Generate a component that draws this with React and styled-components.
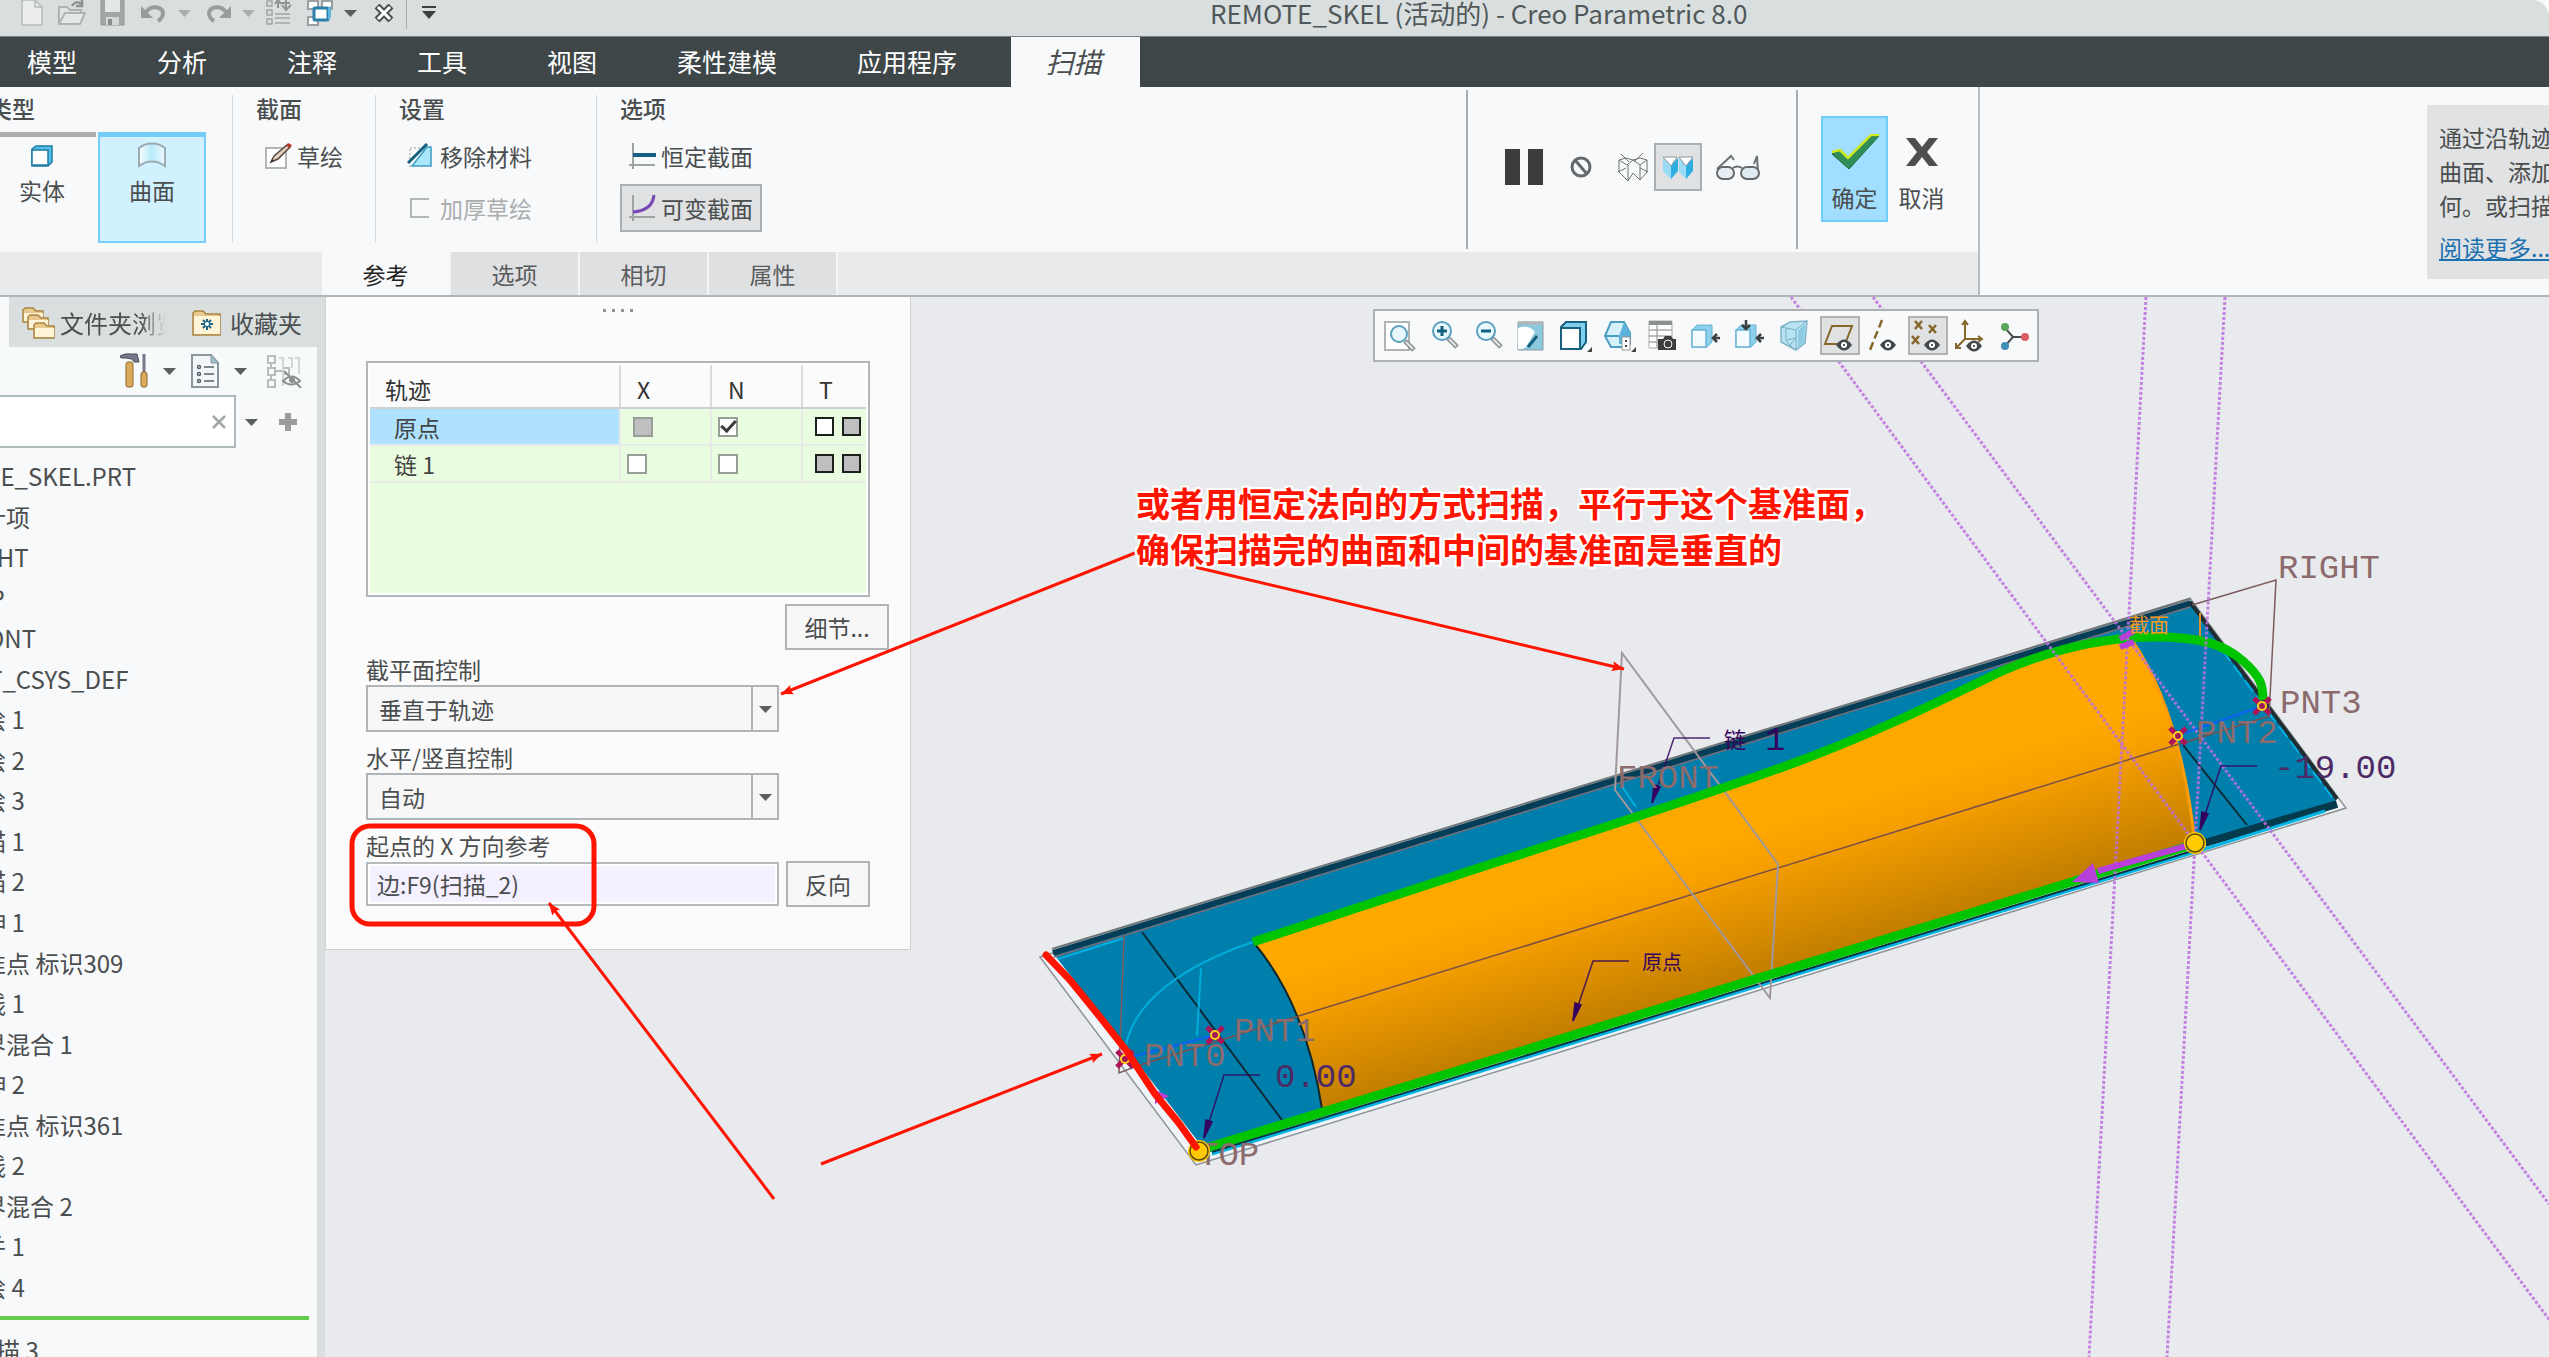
import React from "react";
import styled, { createGlobalStyle, css } from "styled-components";

const Global = createGlobalStyle`
  * { box-sizing: border-box; }
  body {
    margin: 0;
    overflow: hidden;
    background: #f8f9fb;
    color: #4b4e4f;
    font-family: "Noto Sans CJK SC", "Open Sans", sans-serif;
    font-size: 23px;
    line-height: 26px;
  }
  button, input, select { font: inherit; color: inherit; margin: 0; }
  button { padding: 0; background: none; border: 0; }
  svg { display: block; flex: none; }
`;

/* ---------- shell ---------- */
const Shell = styled.div`
  position: relative;
  display: flex;
  flex-direction: column;
  height: 100vh;
  overflow: hidden;
  white-space: nowrap;
`;

const TitleBar = styled.header`
  position: relative;
  display: flex;
  align-items: center;
  height: 36px;
  padding: 0 0 10px 14px;
  background: #d9dfde;
  border-top-right-radius: 17px;
`;

const QuickBar = styled.div`
  display: flex;
  align-items: center;
  gap: 4px;
`;

const QuickButton = styled.button`
  display: flex;
  justify-content: center;
  width: ${(p) => p.$w || 36}px;
`;

const Split = styled.div`
  display: flex;
  align-items: center;
`;

const QuickRule = styled.span`
  width: 1px;
  height: 32px;
  background: #a9afae;
`;

const WindowTitle = styled.h1`
  position: absolute;
  left: 1210px;
  top: 0;
  margin: 0;
  font-size: 26px;
  line-height: 26px;
  font-weight: 400;
  color: #50585a;
`;

const MenuBar = styled.nav`
  display: flex;
  height: 51px;
  background: #3e4648;
  border-top: 1px solid #7c8385;
  overflow: hidden;
`;

const MenuItem = styled.button`
  flex: none;
  padding: 0 40px 2px;
  font-size: 25px;
  color: #fff;
  &:first-child { margin-left: -13px; }
`;

const MenuActive = styled(MenuItem)`
  margin-left: 14px;
  padding: 0 36px 2px 32px;
  width: 129px;
  background: #f8f9fb;
  color: #4b4e4f;
  font-size: 28px;
  font-style: italic;
`;

/* ---------- ribbon ---------- */
const Ribbon = styled.section`
  display: flex;
  height: 210px;
  border-bottom: 2px solid #b0b5b7;
`;

const RibbonMain = styled.div`
  flex: 1;
  min-width: 0;
  display: flex;
  flex-direction: column;
`;

const Groups = styled.div`
  flex: 1;
  display: flex;
`;

const Group = styled.div`
  width: ${(p) => p.$w}px;
  margin: 8px 0 9px;
  padding-left: ${(p) => (p.$first ? 0 : 23)}px;
  border-left: ${(p) => (p.$first ? 0 : 1)}px solid #d6d9db;
  display: flex;
  flex-direction: column;
  align-items: flex-start;
`;

const GroupTitle = styled.h2`
  margin: 0 0 11px;
  font-size: 23px;
  line-height: 26px;
  font-weight: 500;
`;

const TypeGroup = styled(Group)`
  > ${GroupTitle} { margin-left: -11px; }
`;

const TypeRow = styled.div`
  display: flex;
  gap: 2px;
  margin-left: -12px;
`;

const BigButton = styled.button`
  display: flex;
  flex-direction: column;
  align-items: center;
  gap: 9px;
  width: 108px;
  height: 111px;
  padding-top: 5px;
  border-top: 5px solid #acadae;
  ${(p) =>
    p.$on &&
    css`
      border: 2px solid #77cffc;
      border-top: 5px solid #74cdf8;
      background: #d1f1ff;
    `}
`;

const Tool = styled.button`
  display: flex;
  align-items: center;
  gap: 5px;
  height: 48px;
  margin-bottom: 4px;
  padding: 0 7px 0 6px;
  border: 2px solid ${(p) => (p.$on ? "#abafb1" : "transparent")};
  background: ${(p) => (p.$on ? "#dfe1e3" : "none")};
  &:disabled { color: #aaadae; }
`;

const Playback = styled.div`
  width: 330px;
  margin: 3px 0 3px auto;
  padding: 0 0 5px 34px;
  border-left: 2px solid #a9adaf;
  display: flex;
  align-items: center;
  gap: 4px;
`;

const PlayButton = styled.button`
  display: flex;
  align-items: center;
  justify-content: center;
  width: ${(p) => p.$w || 48}px;
  height: 48px;
  border: 2px solid ${(p) => (p.$on ? "#abafb1" : "transparent")};
  background: ${(p) => (p.$on ? "#dfe1e3" : "none")};
`;

const Confirm = styled.div`
  width: 182px;
  margin: 3px 0;
  padding: 0 0 2px 23px;
  border-left: 2px solid #a9adaf;
  display: flex;
  align-items: center;
`;

const ConfirmButton = styled.button`
  display: flex;
  flex-direction: column;
  align-items: center;
  justify-content: flex-end;
  gap: 14px;
  width: 67px;
  height: 106px;
  padding-bottom: 10px;
  border: 2px solid ${(p) => (p.$on ? "#6fcdf9" : "transparent")};
  background: ${(p) => (p.$on ? "#a2deff" : "none")};
`;

const DashTabs = styled.div`
  display: flex;
  height: 45px;
  padding-left: 322px;
  background: #e9eaec;
`;

const DashTab = styled.button`
  width: 129px;
  border-right: 2px solid #f3f4f5;
  background: ${(p) => (p.$on ? "#f8f9fb" : "#dfe0e2")};
  color: ${(p) => (p.$on ? "#222" : "#5a5c5d")};
`;

const Help = styled.aside`
  flex: 0 0 571px;
  padding: 18px 0 15px 447px;
  border-left: 2px solid #b9bdbf;
  overflow: hidden;
`;

const HelpCard = styled.div`
  width: 320px;
  height: 174px;
  padding: 15px 12px;
  background: #e0e2e4;
  line-height: 34px;
  > p { margin: 0 0 8px; white-space: pre; }
  > a { color: #1c71b0; text-decoration: underline; }
`;

/* ---------- body ---------- */
const Body = styled.div`
  flex: 1;
  min-height: 0;
  display: flex;
`;

const Sidebar = styled.aside`
  flex: 0 0 325px;
  display: flex;
  flex-direction: column;
  border-right: 8px solid #d9dfdf;
  font-size: 24px;
  overflow: hidden;
`;

const SideTabs = styled.div`
  display: flex;
  align-items: center;
  height: 50px;
  margin-left: 9px;
  padding: 2px 0 0 13px;
  background: #d9dfdf;
`;

const SideTab = styled.button`
  display: flex;
  align-items: center;
  gap: ${(p) => p.$gap}px;
  margin-right: 26px;
`;

const Fade = styled.span`
  width: 106px;
  overflow: hidden;
  text-align: left;
  mask-image: linear-gradient(90deg, #000 76%, transparent);
`;

const SideTools = styled.div`
  display: flex;
  align-items: center;
  justify-content: flex-end;
  gap: 15px;
  height: 48px;
  padding: 0 15px 0 0;
  background: #f6fafa;
`;

const PlainButton = styled.button`
  display: flex;
`;

const SearchRow = styled.div`
  display: flex;
  align-items: center;
  gap: 9px;
  height: 53px;
`;

const SearchBox = styled.div`
  display: flex;
  align-items: center;
  width: 236px;
  height: 53px;
  padding-right: 8px;
  border: 2px solid #aeb9bb;
  border-left: 0;
  background: #fff;
  > input { flex: 1; min-width: 0; border: 0; outline: 0; background: none; }
`;

const Tree = styled.ul`
  flex: 1;
  min-height: 0;
  margin: 0;
  padding: 8px 0 9px;
  list-style: none;
  display: grid;
  grid-auto-rows: 1fr;
`;

const TreeItem = styled.li`
  display: flex;
  align-items: center;
  min-height: 0;
  margin-left: ${(p) => p.$indent}px;
`;

const InsertMark = styled.div`
  height: 4px;
  margin-right: 8px;
  background: #64cc48;
`;

const Pending = styled.div`
  height: 37px;
  padding-top: 17px;
  margin-left: -28px;
  overflow: hidden;
`;

const Viewport = styled.main`
  position: relative;
  flex: 1;
  min-width: 0;
  background: #e8eaee;
`;

const Scene = styled.svg`
  position: absolute;
  inset: 0;
  width: 100%;
  height: 100%;
`;

const ViewTools = styled.div`
  position: absolute;
  left: 1048px;
  top: 12px;
  display: flex;
  align-items: center;
  gap: 4px;
  height: 53px;
  padding: 0 1px 0 5px;
  border: 2px solid #adb1b3;
  background: #f8f9fb;
`;

const ViewButton = styled.button`
  display: flex;
  align-items: center;
  justify-content: center;
  width: 40px;
  height: 39px;
  border: 2px solid ${(p) => (p.$on ? "#b0b2b4" : "transparent")};
  background: ${(p) => (p.$on ? "#dfe1e3" : "none")};
`;

/* ---------- dashboard panel ---------- */
const Panel = styled.section`
  position: relative;
  width: 586px;
  padding: 12px 20px 42px 40px;
  border: 1px solid #cdd2d4;
  border-top: 0;
  background: #fbfbfc;
`;

const Grip = styled.div`
  display: flex;
  justify-content: center;
  gap: 6px;
  height: 52px;
  margin-right: 20px;
  > i { width: 3px; height: 3px; background: #8f9294; }
`;

const TableFrame = styled.div`
  width: 504px;
  height: 236px;
  padding: 2px;
  border: 2px solid #b1b6b8;
  background: #fff;
`;

const TableFill = styled.div`
  height: 100%;
  background: #eafcdf;
`;

const Tracks = styled.table`
  width: 100%;
  table-layout: fixed;
  border-collapse: collapse;
  th {
    height: 43px;
    padding: 5px 0 0 15px;
    background: #fbfbfc;
    border-bottom: 2px solid #cdd1d2;
    font-weight: 400;
    text-align: left;
    color: #333;
  }
  td {
    height: 37px;
    padding: 0 0 0 6px;
    border-bottom: 2px solid #e6ebe8;
    color: #444;
  }
  th + th { padding-left: 16px; border-left: 2px solid #d8dcdd; }
  td + td { border-left: 2px solid #e6ebe8; }
`;

const NameCell = styled.td`
  && {
    padding-left: 24px;
    background: ${(p) => (p.$on ? "#aee2ff" : "none")};
  }
`;

const Cell = styled.div`
  display: flex;
  align-items: center;
  gap: 8px;
  padding-left: ${(p) => p.$pad || 0}px;
`;

const Tick = styled.input`
  appearance: none;
  display: grid;
  place-content: center;
  width: ${(p) => (p.$dark ? 19 : 20)}px;
  height: ${(p) => (p.$dark ? 19 : 20)}px;
  margin: 0;
  border: 2px solid ${(p) => (p.$dark ? "#1d1f1d" : "#9a9e9b")};
  background: ${(p) => (p.$grey ? "#bfbfbf" : "#fff")};
  &:checked::before {
    content: "";
    width: 12px;
    height: 6px;
    margin-bottom: 4px;
    border: solid #3a3c3a;
    border-width: 0 0 3px 3px;
    rotate: -48deg;
  }
`;

const boxed = css`
  border: 2px solid #b1b4b6;
  background: #f7f7f8;
`;

const PushButton = styled.button`
  ${boxed}
  width: ${(p) => p.$w}px;
  height: 46px;
`;

const DetailRow = styled.div`
  display: flex;
  justify-content: flex-end;
  margin: 7px 1px 6px 0;
`;

const Field = styled.div`
  display: flex;
  flex-direction: column;
  margin-bottom: ${(p) => p.$gap || 0}px;
  > label { line-height: 26px; margin-bottom: 3px; }
`;

const SelectWrap = styled.div`
  ${boxed}
  position: relative;
  width: 413px;
  height: 47px;
`;

const Select = styled.select`
  appearance: none;
  width: 100%;
  height: 100%;
  padding: 0 30px 0 11px;
  border: 0;
  outline: 0;
  background: none;
`;

const SelectArrow = styled.span`
  position: absolute;
  inset: 0 0 0 auto;
  width: 26px;
  display: grid;
  place-content: center;
  border-left: 2px solid #b1b4b6;
  pointer-events: none;
`;

const RefRow = styled.div`
  display: flex;
  align-items: center;
  gap: 7px;
`;

const RefInput = styled.input`
  width: 413px;
  height: 44px;
  padding: 0 9px;
  border: 2px solid #b5babc;
  outline: 0;
  background: #f5f0ff;
  box-shadow: inset 0 0 0 2px #fff;
`;

/* ---------- annotations ---------- */
const Notes = styled.svg`
  position: absolute;
  inset: 0;
  width: 100%;
  height: 100%;
  pointer-events: none;
`;

const Callout = styled.p`
  position: absolute;
  left: 811px;
  top: 183px;
  margin: 0;
  font-size: 34px;
  line-height: 46px;
  font-weight: 700;
  color: #ff1400;
  text-shadow: 2px 0 #fff, -2px 0 #fff, 0 2px #fff, 0 -2px #fff, 2px 2px #fff,
    -2px -2px #fff, 2px -2px #fff, -2px 2px #fff, 0 0 4px #fff;
`;

/* ---------- icons ---------- */
const Caret = ({ w = 13, c = "#5b5e5f" }) => (
  <svg width={w} height="8" viewBox="0 0 13 8"><path d="M0 1h13L6.500 8z" fill={c} /></svg>
);
const Svg = ({ w, h, children }) => (
  <svg width={w} height={h} viewBox={`0 0 ${w} ${h}`} fill="none">{children}</svg>
);

const NewIcon = () => (
  <Svg w={22} h={26}><path d="M1 0h13l7 7v18H1z" fill="#eceeee" stroke="#b5baba" strokeWidth="1.500" /><path d="M14 0v7h7" stroke="#b5baba" strokeWidth="1.500" /></Svg>
);
const OpenIcon = () => (
  <Svg w={28} h={26}><path d="M1 23V7h8l3 3h11v4" stroke="#b0b4b4" strokeWidth="2" fill="#e3e5e5" /><path d="M1 24l6-11h20l-5 11z" fill="#e6e8e8" stroke="#b0b4b4" strokeWidth="2" /><path d="M14 6c2-4 6-5 9-2M24 0v6h-6" stroke="#8e9292" strokeWidth="2.500" /></Svg>
);
const SaveIcon = () => (
  <Svg w={25} h={26}><path d="M1 0h23v25H1z" fill="#a2a6a6" stroke="#929696" /><path d="M5 0h15v12H5z" fill="#e3e6e6" /><path d="M6 17h13v8H6z" fill="#d4d7d7" /><path d="M8 19h4v6H8z" fill="#888c8c" /></Svg>
);
const UndoIcon = ({ flip }) => (
  <svg width="26" height="20" viewBox="0 0 26 20" fill="none" transform={flip ? "scale(-1 1)" : undefined}>
    <path d="M5 9c5-7 16-6 17 1 0 4-2 6-5 8" stroke="#989c9c" strokeWidth="4" /><path d="M0 3v12h12z" fill="#989c9c" />
  </svg>
);
const RegenIcon = () => (
  <Svg w={28} h={26}>
    <g stroke="#a3a7a7" strokeWidth="1.500"><path d="M1 1h5v5H1zM1 10h5v5H1zM1 19h5v5H1z" /><path d="M9 14h15M9 18h15M9 23h15" /></g>
    <path d="M12 8V1M9 4l3-4 3 4M20 0v9M16 5l4 5 5-5M14 3h10" stroke="#8f9393" strokeWidth="2" />
  </Svg>
);
const WindowsIcon = () => (
  <Svg w={28} h={26}>
    <path d="M2 1h10v8H2zM16 1h10v8H16zM2 17h10v8H2z" fill="#fff" stroke="#9aa0a2" strokeWidth="2" />
    <rect x="8" y="8" width="14" height="12" rx="1" fill="#fff" stroke="#2b7fa8" strokeWidth="3" /><path d="M22 8l3-2v11l-3 3z" fill="#5bb5dc" />
  </Svg>
);
const CloseWinIcon = () => (
  <Svg w={20} h={18}>
    <path d="M3 2l14 14M17 2L3 16" stroke="#4b4f50" strokeWidth="7" /><path d="M4 3l12 12M16 3L4 15" stroke="#fff" strokeWidth="3" />
  </Svg>
);
const MoreIcon = () => (
  <Svg w={14} h={14}><path d="M0 1h14" stroke="#3c4041" strokeWidth="2" /><path d="M0 5h14l-7 8z" fill="#3c4041" /></Svg>
);

const SolidIcon = () => (
  <Svg w={24} h={26}><path d="M2 7l4-3h16v16l-4 4H2z" fill="#55bfe8" stroke="#1d7ba3" strokeWidth="1.500" /><path d="M2 8h16v15H2z" fill="#fff" stroke="#1d7ba3" strokeWidth="1.500" /></Svg>
);
const SurfaceIcon = () => (
  <Svg w={28} h={26}>
    <defs><linearGradient id="surf"><stop stopColor="#f7fdff" /><stop offset=".5" stopColor="#b9ebfb" /><stop offset="1" stopColor="#eefaff" /></linearGradient></defs>
    <path d="M1 24V6c7-6 19-6 26 0v18c-8-6-18-6-26 0z" fill="url(#surf)" stroke="#9aabb2" strokeWidth="2" />
  </Svg>
);
const SketchIcon = () => (
  <Svg w={28} h={28}>
    <path d="M2 6h20v20H2z" fill="#fff" stroke="#b2b5b6" strokeWidth="2" /><path d="M7 20l3-6L23 3l3 2-12 12z" fill="#e3cfc0" stroke="#5b4a40" strokeWidth="1.500" /><path d="M22 4l2-3 4 2-2 3z" fill="#b93b2c" /><path d="M6 21l2-4 2 2z" fill="#333" />
  </Svg>
);
const RemoveIcon = () => (
  <Svg w={28} h={26}><path d="M3 6v18M3 5h10" stroke="#999" strokeDasharray="2 2" /><path d="M20 4h4v19H5z" fill="#abe7fb" stroke="#3b9cc4" strokeWidth="1.500" /><path d="M1 20L20 1" stroke="#155f80" strokeWidth="3" /></Svg>
);
const ThickenIcon = () => (
  <Svg w={28} h={22}><path d="M22 2H4v18h18" stroke="#b4b7b8" strokeWidth="2" /></Svg>
);
const ConstIcon = () => (
  <Svg w={28} h={28}><path d="M5 1v26M1 23h26" stroke="#9fa3a4" strokeWidth="2" /><path d="M5 13h23" stroke="#175f82" strokeWidth="4" /></Svg>
);
const VarIcon = () => (
  <Svg w={28} h={28}><path d="M5 1v26M1 23h26" stroke="#9fa3a4" strokeWidth="2" /><path d="M5 18c13-1 20-7 21-17" stroke="#7a49b5" strokeWidth="3" /></Svg>
);

const PauseIcon = () => (
  <Svg w={38} h={36}><path d="M0 0h15v36H0zM23 0h15v36H23z" fill="#3b3c3d" /></Svg>
);
const BanIcon = () => (
  <Svg w={22} h={22}><circle cx="11" cy="11" r="9" stroke="#66696b" strokeWidth="3" /><path d="M5 4l12 14" stroke="#66696b" strokeWidth="3" /></Svg>
);
const MeshIcon = () => (
  <Svg w={34} h={30}><path d="M3 8l7-2 7 2 7-2 7 2v12l-7 8-7-7-5 8-9-9zM3 8l8 5 6-5 7 5 7-5M12 13v15M24 13v15M2 20l8-4M32 20l-8-4M5 2l8 8M27 1l-9 9" stroke="#6f7273" strokeWidth="1" /></Svg>
);
const AttachIcon = () => (
  <Svg w={32} h={24}>
    <path d="M1 3l8 7v14l-8-8zM17 3l7 7v14l-7-7z" fill="#9adcf5" /><path d="M9 10l7-7v13l-7 8zM24 10l7-7v13l-7 8z" fill="#2eaee0" /><path d="M1 2h14l-6 9zM17 2h14l-7 9z" fill="#fff" stroke="#8b979c" />
  </Svg>
);
const GlassesIcon = () => (
  <Svg w={46} h={26}>
    <path d="M2 15L16 2l3 4M39 10L42 2l1 16" stroke="#6c6f70" strokeWidth="2" /><rect x="2" y="13" width="17" height="12" rx="6" fill="#e6eef3" stroke="#65696b" strokeWidth="2" /><rect x="26" y="13" width="18" height="12" rx="6" fill="#dfeaf1" stroke="#65696b" strokeWidth="2" /><path d="M18 14q4-3 9 0" stroke="#65696b" strokeWidth="2" />
  </Svg>
);
const OkIcon = () => (
  <Svg w={50} h={36}><path d="M2 20l8-3 8 8L42 2h7L19 35z" fill="#2f8d58" stroke="#1c6b3c" /><path d="M2 18l8-2 8 8L41 1h8" stroke="#cdea20" strokeWidth="2.500" /></Svg>
);
const CancelIcon = () => (
  <Svg w={34} h={32}><path d="M1 0h9l7 9 7-9h9L22 14l11 14h-9l-7-9-7 9H1l11-14z" fill="#4c4e4f" /></Svg>
);

const folder = (x, y, w, h) => (
  <g key={`${x}-${y}`}><path d={`M${x} ${y + h}V${y + 2}l2-2h8l3 3h${w - 14}v${h - 3}z`} fill="#e9c88d" stroke="#a98444" strokeWidth="1.500" /><path d={`M${x + 1} ${y + 5}h${w - 2}v${h - 6}h-${w - 2}z`} fill="#fff3d8" /></g>
);
const FoldersIcon = () => <Svg w={34} h={34}>{folder(1, 2, 21, 14)}{folder(6, 9, 21, 14)}{folder(12, 17, 21, 15)}</Svg>;
const FavIcon = () => (
  <Svg w={30} h={28}>{folder(1, 2, 28, 24)}<path d="M15 10v11M9 15h12M11 11l8 8M19 11l-8 8" stroke="#1b6283" strokeWidth="2" /><circle cx="15" cy="15" r="2" fill="#fff" /></Svg>
);
const HammerIcon = () => (
  <Svg w={28} h={36}>
    <path d="M0 3q5-3 11-2h6l2 8h-5l-2-3-6-1H1z" fill="#77798a" stroke="#4d4f5c" /><rect x="6" y="9" width="7" height="25" rx="2" fill="#dbab5d" stroke="#8d652a" /><path d="M24 1v18" stroke="#77798a" strokeWidth="3" /><rect x="21" y="19" width="6" height="15" rx="2" fill="#dbab5d" stroke="#8d652a" />
  </Svg>
);
const ListIcon = () => (
  <Svg w={28} h={34}>
    <path d="M1 1h19l7 8v24H1z" fill="#f3f7fa" stroke="#8a979e" strokeWidth="2" /><path d="M20 1v8h7" fill="#9fc0c9" stroke="#8a979e" /><g stroke="#55626a" strokeWidth="1.500"><path d="M13 13h10M13 20h10M13 27h10" /><circle cx="8" cy="13" r="1.500" /><circle cx="8" cy="20" r="1.500" /><circle cx="8" cy="27" r="1.500" /></g>
  </Svg>
);
const TreeIcon = () => (
  <Svg w={36} h={34}>
    <g stroke="#b8bcbd" strokeWidth="2"><path d="M2 2h7v7H2zM2 14h7v7H2zM2 26h7v7H2zM5 9v5M5 21v5M9 17h9M17 14h6v6h-6z" /><path d="M13 4h4v28M22 4h4v10M29 4h4v16" stroke="#d3d6d7" /></g>
    <path d="M17 27q9-9 17 0q-9 7-17 0zM18 17l17 17" stroke="#8b8f90" strokeWidth="2" /><circle cx="26" cy="26" r="3" fill="#8b8f90" />
  </Svg>
);
const XIcon = () => <Svg w={14} h={14}><path d="M1 1l12 12M13 1L1 13" stroke="#a3a7a8" strokeWidth="2.500" /></Svg>;
const PlusIcon = () => <Svg w={20} h={20}><path d="M10 1v18M1 10h18" stroke="#9a9c9d" strokeWidth="6" /></Svg>;

const Lens = ({ x = 16, y = 12, r = 9, children }) => (
  <g><path d={`M${x + 6} ${y + 7}l9 9`} stroke="#8e9293" strokeWidth="5" /><path d={`M${x + 7} ${y + 8}l7 7`} stroke="#e2e4e5" strokeWidth="2" /><circle cx={x} cy={y} r={r} fill="#e9f8fd" stroke="#5a9fbe" strokeWidth="2" />{children}</g>
);
const Eye = ({ x, y }) => (
  <g><path d={`M${x - 8} ${y}q8-11 16 0q-8 11-16 0z`} fill="#45484a" /><circle cx={x} cy={y} r="3" fill="#fff" /><circle cx={x} cy={y} r="1" fill="#222" /></g>
);
const cubeLite = (
  <><path d="M2 11l5-5h15v17l-5 5H2z" fill="#8dd0ec" stroke="#69b3d4" /><path d="M2 11h14v17H2z" fill="#f4fbfe" stroke="#69b3d4" strokeWidth="1.500" /></>
);
const VIEW_ICONS = [
  ["重新调整", <><path d="M3 3h24v28H3z" fill="#fff" stroke="#b0b3b4" strokeWidth="2" /><Lens x={17} y={15} r={8} /></>],
  ["放大", <Lens><path d="M16 7v10M11 12h10" stroke="#11607f" strokeWidth="3" /></Lens>],
  ["缩小", <Lens><path d="M11 12h10" stroke="#11607f" strokeWidth="3" /></Lens>],
  ["重画", <><path d="M4 3h25v28H4z" fill="#8cc8de" stroke="#8a999f" /><path d="M4 9q11-4 17 4L12 28q-4 3-8 2z" fill="#fff" /><path d="M4 4h25" stroke="#b2b5b6" strokeWidth="3" /><path d="M14 28l9-11" stroke="#17607f" strokeWidth="3" /></>],
  ["显示样式", <><path d="M3 8l5-5h20v20l-5 7H3z" fill="#7fd0ee" stroke="#1a6180" strokeWidth="2" /><path d="M3 9h19v21H3z" fill="#fff" stroke="#1a6180" strokeWidth="2" /><path d="M34 28v5h-5z" fill="#444" /></>],
  ["已保存方向", <><path d="M3 17L9 3h13l6 11v11l-5 3H9z" fill="#d6f1fa" stroke="#4a9dc1" strokeWidth="2" /><path d="M17 17L22 3l6 11v11H17z" fill="#5cb4dc" /><path d="M3 17h14" stroke="#4a9dc1" strokeWidth="2" /><path d="M20 18h8v13h-8z" fill="#fff" stroke="#999" /><path d="M24 21v2M24 26v2" stroke="#444" strokeWidth="2" /><path d="M34 28v5h-5z" fill="#444" /></>],
  ["视图管理器", <><path d="M3 2h23v27H3z" fill="#fff" stroke="#a8abac" /><path d="M3 4h23" stroke="#8e9192" strokeWidth="4" /><path d="M3 11h23M3 17h23M3 23h23M11 5v24" stroke="#a8abac" strokeWidth="1.500" /><path d="M12 20h5l2-3h6l2 3h3v11H12z" fill="#3b3d3e" /><circle cx="22" cy="25" r="4" stroke="#fff" strokeWidth="1" /></>],
  ["外观", <>{cubeLite}<path d="M30 19h-7M27 15l-4 4 4 4" stroke="#3c4042" strokeWidth="2.500" /></>],
  ["场景", <>{cubeLite}<path d="M12 1v8M8 6l4 4 4-4M30 19h-7M27 15l-4 4 4 4" stroke="#3c4042" strokeWidth="2.500" /></>],
  ["透视图", <><path d="M3 8L12 3l17-1-2 22-9 7L3 23z" fill="#b9e3f3" stroke="#82b4c7" strokeWidth="1.500" /><path d="M3 8l15 3 11-9M18 11v20M8 10v12l6 6M9 21l9-2M12 26l5-6" stroke="#74aec5" strokeWidth="1" /><path d="M20 12l7-7-1 18-6 6z" fill="#8dcbe3" /></>],
  ["平面显示", <><path d="M10 7h20l-7 18H3z" stroke="#86672a" strokeWidth="2" /><Eye x={22} y={26} /></>, true],
  ["轴显示", <><path d="M16 1L4 31" stroke="#86672a" strokeWidth="2.500" strokeDasharray="8 4" /><Eye x={22} y={26} /></>],
  ["点显示", <><path d="M5 2l7 8M12 2l-7 8M19 6l7 8M26 6l-7 8M2 17l7 8M9 17l-7 8" stroke="#86672a" strokeWidth="2.500" /><Eye x={22} y={26} /></>, true],
  ["坐标系显示", <><path d="M11 20V3M11 20h15M11 20l-8 8M8 6l3-4 3 4M24 17l4 3-4 3M2 24v5h5" stroke="#86672a" strokeWidth="2" /><Eye x={20} y={27} /></>],
  ["旋转中心", <><path d="M7 9l8 9h12M15 18L7 27" stroke="#4b4e50" strokeWidth="2" /><circle cx="7" cy="8" r="4" fill="#5ba55a" /><circle cx="27" cy="18" r="4" fill="#df5f63" /><circle cx="7" cy="27" r="4" fill="#3f8fb5" /></>],
];

/* ---------- model drawing ---------- */
const Leader = ({ x, y, dx, dy }) => (
  <g>
    <path d={`M${x + 36} ${y}h-36l${dx} ${dy}`} fill="none" stroke="#35045f" strokeWidth="1.500" opacity=".85" />
    <path d={`M${x + dx} ${y + dy}l2-18 6 2z`} fill="#35005f" stroke="#35005f" strokeWidth="1.500" />
  </g>
);
const Point = ({ x, y }) => (
  <g>
    <path d={`M${x - 8} ${y - 8}l16 16m0-16l-16 16`} stroke="#ae1257" strokeWidth="5" />
    <circle cx={x} cy={y} r="4" fill="#a01657" stroke="#ffd21c" strokeWidth="2" />
  </g>
);
const Handle = ({ x, y }) => (
  <g><circle cx={x} cy={y} r="11" fill="#ffc800" /><circle cx={x} cy={y} r="9" fill="#ffcb00" stroke="#5a4a10" strokeWidth="1.500" /></g>
);
const CadText = styled.text`
  font-family: "Liberation Mono", "Noto Sans CJK SC", monospace;
  font-size: ${(p) => p.$size || 34}px;
  fill: ${(p) => p.$fill || "#8d6b6d"};
`;

const UPPER = "C1600 829 1700 797 1783 767S1930 706 2000 672";

const Model = () => (
  <Scene viewBox="325 297 2224 1060" preserveAspectRatio="xMinYMin slice" fill="none" aria-label="REMOTE_SKEL">
    <defs>
      <linearGradient id="skin" gradientUnits="userSpaceOnUse" x1="386" y1="1250" x2="430" y2="1392">
        <stop stopColor="#ffa800" /><stop offset=".25" stopColor="#f7a000" /><stop offset="1" stopColor="#bf7c00" />
      </linearGradient>
    </defs>
    <path d="M1040 957L1196 1165 2346 808 2190 598z" fill="#f0f3f7" stroke="#8f9294" strokeWidth="1.500" />
    <path d="M1053 953L2190 603 2337 800 1207 1153z" fill="#007fac" />
    <path d="M1052 949L2190 599" stroke="#6f7578" strokeWidth="2" />
    <path d="M1053 953L2191 603" stroke="#033d57" strokeWidth="6" />
    <path d="M1054 957L2190 607" stroke="#7d6a72" strokeWidth="1.500" />
    <path d="M1058 959L1124 938M1621 785L1636 807" stroke="#00aee0" strokeWidth="2" />
    <path d="M2190 602L2337 799" stroke="#1f2d33" strokeWidth="4" />
    <path d="M2222 650L2332 797" stroke="#00aee0" strokeWidth="2" strokeDasharray="14 5" />
    <path d="M2205 843L2337 804" stroke="#033a4c" strokeWidth="8" />
    <path d="M1212 1154L2205 849 2325 811" stroke="#00b4e6" strokeWidth="3" />
    <path d="M1212 1152L2205 847" stroke="#06333f" strokeWidth="2" />
    <path d="M1142 932L1282 1120M2183 745L2247 825" stroke="#0d2b36" strokeWidth="2" />
    <path d="M1126 1045C1135 1000 1185 965 1253 942M1201 968L1197 1036" stroke="#00aedb" strokeWidth="2" />

    <path d={`M1254 943L1500 861${UPPER}C2050 650 2090 641 2132 640Q2180 710 2195 843L1322 1109Q1306 1005 1254 943z`} fill="url(#skin)" />
    <path d="M1254 943Q1306 1005 1322 1109" stroke="#10262b" strokeWidth="2" />
    <path d="M2132 640Q2180 710 2195 843" stroke="#ff9c0a" strokeWidth="3" />
    <path d="M2200 613v24" stroke="#e0922a" strokeWidth="2" />
    <path d="M1140 1065L2270 716" stroke="#7b4f45" strokeWidth="1.500" />
    <path d="M1124 936L1119 1073 1140 1065M2192 605L2276 580 2269 717" stroke="#7d5a5c" strokeWidth="1.500" />
    <path d="M1131 1057L1215 1035M2185 733L2262 706" stroke="#0a63f0" strokeWidth="2" />

    <path d="M1622 653L1778 864 1770 998 1615 790z" stroke="#a0989c" strokeWidth="2" />
    <path d={`M1253 942L1500 861${UPPER}C2050 650 2100 638 2150 637S2225 645 2243 661 2263 685 2263 700M1206 1148L2195 844`} stroke="#00c400" strokeWidth="9" />

    <g stroke="#bd6fe0" strokeWidth="3" strokeDasharray="3 2" opacity=".85">
      <path d="M1791 297L2195 843 2577 1357M1873 297L2121 630 2549 1204" />
      <path d="M2146 297L2089 1357M2225 297L2195 843 2167 1357" />
    </g>
    <path d="M2190 845L2098 871M2120 639l14-8M2120 647l14-5" stroke="#b83fd9" strokeWidth="6" />
    <path d="M2072 882L2093 863 2099 883zM1155 1090l14 6-14 8z" fill="#b83fd9" />

    <Leader x={1224} y={1075} dx={-20} dy={63} />
    <Leader x={2221} y={766} dx={-21} dy={64} />
    <Leader x={1674} y={738} dx={-22} dy={65} />
    <Leader x={1593} y={961} dx={-20} dy={60} />

    <CadText x="1144" y="1066">PNT0</CadText>
    <CadText x="1234" y="1041">PNT1</CadText>
    <CadText x="1198" y="1165">TOP</CadText>
    <CadText x="2278" y="578">RIGHT</CadText>
    <CadText x="2280" y="713">PNT3</CadText>
    <CadText x="2196" y="743">PNT2</CadText>
    <CadText x="1617" y="788">FRONT</CadText>
    <CadText x="1275" y="1087" $fill="#4b2a66">0.00</CadText>
    <CadText x="2274" y="778" $fill="#4b2a66">-19.00</CadText>
    <CadText x="1724" y="748" $size={22} $fill="#35045f">链</CadText>
    <CadText x="1765" y="750" $fill="#35045f">1</CadText>
    <CadText x="1642" y="970" $size={20} $fill="#35045f">原点</CadText>
    <CadText x="2129" y="633" $size={20} $fill="#f59a1c">截面</CadText>

    <Point x={1125} y={1059} />
    <Point x={1215} y={1035} />
    <Point x={2178} y={736} />
    <Point x={2262} y={706} />
    <Handle x={1199} y={1151} />
    <Handle x={2195} y={843} />
    <path d="M1046 955L1070 980 1100 1017 1126 1050 1155 1094 1178 1122 1196 1147" stroke="#ff1400" strokeWidth="7" strokeLinecap="round" strokeLinejoin="round" />
  </Scene>
);

const ARROWS = [
  [1135, 553, 781, 694],
  [1195, 567, 1624, 669],
  [774, 1199, 549, 903],
  [821, 1164, 1102, 1054],
];

const Annotations = () => (
  <Notes viewBox="325 297 2224 1060" preserveAspectRatio="xMinYMin slice" fill="none" overflow="visible">
    <defs>
      <marker id="head" viewBox="0 0 12 10" refX="12" refY="5" markerWidth="12" markerHeight="10" markerUnits="userSpaceOnUse" orient="auto">
        <path d="M0 0l12 5-12 5 2-5z" fill="#ff1400" />
      </marker>
    </defs>
    {ARROWS.map(([x1, y1, x2, y2]) => (
      <line key={x1} x1={x1} y1={y1} x2={x2} y2={y2} stroke="#ff1400" strokeWidth="3" markerEnd="url(#head)" />
    ))}
    <rect x="352" y="826" width="242" height="98" rx="18" stroke="#ff1400" strokeWidth="5" />
  </Notes>
);

const MENUS = ["模型", "分析", "注释", "工具", "视图", "柔性建模", "应用程序"];
const TREE = [
  "设计项", "RIGHT", "TOP", "FRONT", "PRT_CSYS_DEF", "草绘 1", "草绘 2", "草绘 3", "扫描 1", "扫描 2",
  "拉伸 1", "基准点 标识309", "曲线 1", "边界混合 1", "拉伸 2", "基准点 标识361", "曲线 2", "边界混合 2", "合并 1", "草绘 4",
];

export default function App() {
  return (
    <Shell>
      <Global />
      <TitleBar>
        <QuickBar>
          <QuickButton aria-label="新建"><NewIcon /></QuickButton>
          <QuickButton aria-label="打开"><OpenIcon /></QuickButton>
          <QuickButton aria-label="保存"><SaveIcon /></QuickButton>
          <Split>
            <QuickButton $w={40} aria-label="撤消"><UndoIcon /></QuickButton>
            <QuickButton $w={20} aria-label="撤消列表"><Caret c="#a9adad" /></QuickButton>
          </Split>
          <Split>
            <QuickButton $w={40} aria-label="重做"><UndoIcon flip /></QuickButton>
            <QuickButton $w={20} aria-label="重做列表"><Caret c="#a9adad" /></QuickButton>
          </Split>
          <QuickButton aria-label="重新生成"><RegenIcon /></QuickButton>
          <Split>
            <QuickButton $w={36} aria-label="窗口"><WindowsIcon /></QuickButton>
            <QuickButton $w={24} aria-label="窗口列表"><Caret /></QuickButton>
          </Split>
          <QuickButton aria-label="关闭"><CloseWinIcon /></QuickButton>
          <QuickRule />
          <QuickButton aria-label="自定义"><MoreIcon /></QuickButton>
        </QuickBar>
        <WindowTitle>REMOTE_SKEL (活动的) - Creo Parametric 8.0</WindowTitle>
      </TitleBar>

      <MenuBar>
        {MENUS.map((m) => <MenuItem key={m}>{m}</MenuItem>)}
        <MenuActive>扫描</MenuActive>
      </MenuBar>

      <Ribbon>
        <RibbonMain>
          <Groups>
            <TypeGroup $first $w={232}>
              <GroupTitle>类型</GroupTitle>
              <TypeRow>
                <BigButton aria-pressed="false"><SolidIcon />实体</BigButton>
                <BigButton $on aria-pressed="true"><SurfaceIcon />曲面</BigButton>
              </TypeRow>
            </TypeGroup>
            <Group $w={143}>
              <GroupTitle>截面</GroupTitle>
              <Tool><SketchIcon />草绘</Tool>
            </Group>
            <Group $w={221}>
              <GroupTitle>设置</GroupTitle>
              <Tool><RemoveIcon />移除材料</Tool>
              <Tool disabled><ThickenIcon />加厚草绘</Tool>
            </Group>
            <Group $w={220}>
              <GroupTitle>选项</GroupTitle>
              <Tool><ConstIcon />恒定截面</Tool>
              <Tool $on aria-pressed="true"><VarIcon />可变截面</Tool>
            </Group>
            <Playback>
              <PlayButton aria-label="暂停" $w={44}><PauseIcon /></PlayButton>
              <PlayButton aria-label="无预览" $w={62}><BanIcon /></PlayButton>
              <PlayButton aria-label="分离" $w={34}><MeshIcon /></PlayButton>
              <PlayButton aria-label="连接" $on><AttachIcon /></PlayButton>
              <PlayButton aria-label="校验" $w={64}><GlassesIcon /></PlayButton>
            </Playback>
            <Confirm>
              <ConfirmButton $on><OkIcon />确定</ConfirmButton>
              <ConfirmButton><CancelIcon />取消</ConfirmButton>
            </Confirm>
          </Groups>
          <DashTabs>
            <DashTab $on>参考</DashTab>
            <DashTab>选项</DashTab>
            <DashTab>相切</DashTab>
            <DashTab>属性</DashTab>
          </DashTabs>
        </RibbonMain>
        <Help>
          <HelpCard>
            <p>{"通过沿轨迹\n曲面、添加\n何。或扫描"}</p>
            <a href="#help">阅读更多...</a>
          </HelpCard>
        </Help>
      </Ribbon>

      <Body>
        <Sidebar>
          <SideTabs>
            <SideTab $gap={4}><FoldersIcon /><Fade>文件夹浏览器</Fade></SideTab>
            <SideTab $gap={8}><FavIcon />收藏夹</SideTab>
          </SideTabs>
          <SideTools>
            <PlainButton aria-label="设置"><HammerIcon /></PlainButton>
            <PlainButton aria-label="设置列表"><Caret /></PlainButton>
            <PlainButton aria-label="显示"><ListIcon /></PlainButton>
            <PlainButton aria-label="显示列表"><Caret /></PlainButton>
            <PlainButton aria-label="隐藏树"><Svg w={4} h={34} /><TreeIcon /></PlainButton>
          </SideTools>
          <SearchRow>
            <SearchBox>
              <input aria-label="搜索模型树" />
              <PlainButton aria-label="清除"><XIcon /></PlainButton>
            </SearchBox>
            <PlainButton aria-label="搜索选项"><Caret /></PlainButton>
            <PlainButton aria-label="添加"><Svg w={11} h={20} /><PlusIcon /></PlainButton>
          </SearchRow>
          <Tree>
            <TreeItem $indent={-80}>REMOTE_SKEL.PRT</TreeItem>
            {TREE.map((t) => <TreeItem key={t} $indent={-42}>{t}</TreeItem>)}
          </Tree>
          <InsertMark />
          <Pending>扫描 3</Pending>
        </Sidebar>

        <Viewport>
          <Model />
          <Panel>
            <Grip><i /><i /><i /><i /></Grip>
            <TableFrame>
              <TableFill>
                <Tracks>
                  <colgroup><col /><col width="91" /><col width="91" /><col width="64" /></colgroup>
                  <thead><tr><th>轨迹</th><th>X</th><th>N</th><th>T</th></tr></thead>
                  <tbody>
                    <tr>
                      <NameCell $on>原点</NameCell>
                      <td><Cell $pad={6}><Tick type="checkbox" $grey disabled aria-label="原点 X" /></Cell></td>
                      <td><Cell><Tick type="checkbox" defaultChecked aria-label="原点 N" /></Cell></td>
                      <td><Cell $pad={6}><Tick type="checkbox" $dark aria-label="原点 T 1" /><Tick type="checkbox" $dark $grey aria-label="原点 T 2" /></Cell></td>
                    </tr>
                    <tr>
                      <NameCell>链 1</NameCell>
                      <td><Cell><Tick type="checkbox" aria-label="链 1 X" /></Cell></td>
                      <td><Cell><Tick type="checkbox" aria-label="链 1 N" /></Cell></td>
                      <td><Cell $pad={6}><Tick type="checkbox" $dark $grey aria-label="链 1 T 1" /><Tick type="checkbox" $dark $grey aria-label="链 1 T 2" /></Cell></td>
                    </tr>
                  </tbody>
                </Tracks>
              </TableFill>
            </TableFrame>
            <DetailRow><PushButton $w={104}>细节...</PushButton></DetailRow>
            <Field $gap={12}>
              <label htmlFor="plane">截平面控制</label>
              <SelectWrap>
                <Select id="plane"><option>垂直于轨迹</option></Select>
                <SelectArrow><Caret /></SelectArrow>
              </SelectWrap>
            </Field>
            <Field $gap={12}>
              <label htmlFor="horiz">水平/竖直控制</label>
              <SelectWrap>
                <Select id="horiz"><option>自动</option></Select>
                <SelectArrow><Caret /></SelectArrow>
              </SelectWrap>
            </Field>
            <Field>
              <label htmlFor="xref">起点的 X 方向参考</label>
              <RefRow>
                <RefInput id="xref" defaultValue="边:F9(扫描_2)" />
                <PushButton $w={84}>反向</PushButton>
              </RefRow>
            </Field>
          </Panel>
          <ViewTools>
            {VIEW_ICONS.map(([label, art, on]) => (
              <ViewButton key={label} $on={on} aria-label={label}><Svg w={36} h={34}>{art}</Svg></ViewButton>
            ))}
          </ViewTools>
          <Annotations />
          <Callout>或者用恒定法向的方式扫描，平行于这个基准面，<br />确保扫描完的曲面和中间的基准面是垂直的</Callout>
        </Viewport>
      </Body>
    </Shell>
  );
}
